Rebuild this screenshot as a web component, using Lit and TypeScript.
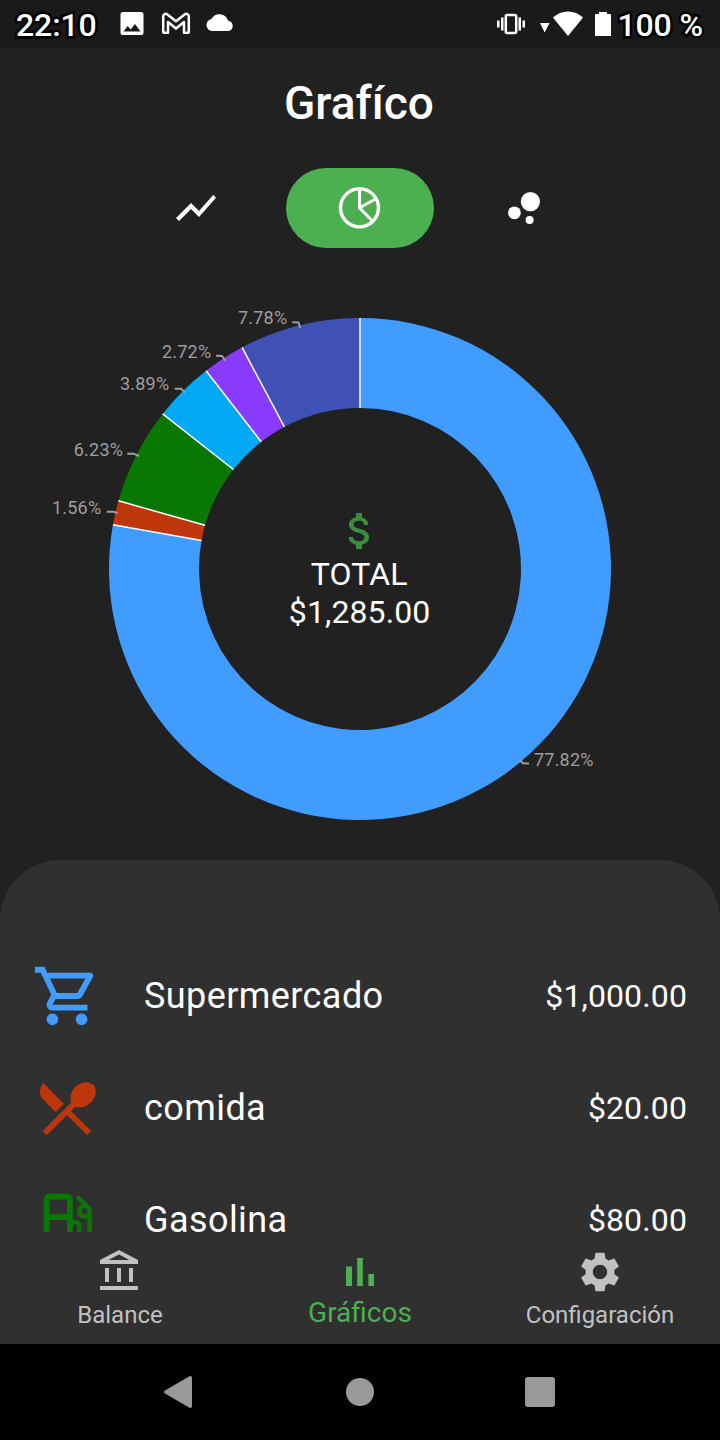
import { LitElement, html, svg, css } from "lit";
import { customElement, property } from "lit/decorators.js";

const ICONS: Record<string, string> = {
  line: "M3.5 18.49l6-6.01 4 4L22 6.92l-1.41-1.41-7.09 7.97-4-4L2 16.99z",
  money:
    "M11.8 10.9c-2.27-.59-3-1.2-3-2.15 0-1.09 1.01-1.85 2.7-1.85 1.78 0 2.44.85 2.5 2.1h2.21c-.07-1.72-1.12-3.3-3.21-3.81V3h-3v2.16c-1.94.42-3.5 1.68-3.5 3.61 0 2.31 1.91 3.46 4.7 4.13 2.5.6 3 1.48 3 2.41 0 .69-.49 1.79-2.7 1.79-2.06 0-2.87-.92-2.98-2.1h-2.2c.12 2.19 1.76 3.42 3.68 3.83V21h3v-2.15c1.95-.37 3.5-1.5 3.5-3.55 0-2.84-2.43-3.81-4.7-4.4z",
  cart: "M15.55 13c.75 0 1.41-.41 1.75-1.03l3.58-6.49c.37-.66-.11-1.48-.87-1.48H5.21l-.94-2H1v2h2l3.6 7.59-1.35 2.44C4.52 15.37 5.48 17 7 17h12v-2H7l1.1-2h7.45zM6.16 6h12.15l-2.76 5H8.53L6.16 6zM7 18c-1.1 0-1.99.9-1.99 2S5.9 22 7 22s2-.9 2-2-.9-2-2-2zm10 0c-1.1 0-1.99.9-1.99 2s.89 2 1.99 2 2-.9 2-2-.9-2-2-2z",
  food: "M8.1 13.34l2.83-2.83L3.91 3.5c-1.56 1.56-1.56 4.09 0 5.66l4.19 4.18zm6.78-1.81c1.53.71 3.68.21 5.27-1.38 1.91-1.91 2.28-4.65.81-6.12-1.46-1.46-4.2-1.1-6.12.81-1.59 1.59-2.09 3.74-1.38 5.27L3.7 19.87l1.41 1.41L12 14.41l6.88 6.88 1.41-1.41L13.41 13l1.47-1.47z",
  gas: "M19.77 7.23l.01-.01-3.72-3.72L15 4.56l2.11 2.11c-.94.36-1.61 1.26-1.61 2.33 0 1.38 1.12 2.5 2.5 2.5.36 0 .69-.08 1-.21v7.21c0 .55-.45 1-1 1s-1-.45-1-1V14c0-1.1-.9-2-2-2h-1V5c0-1.1-.9-2-2-2H6c-1.1 0-2 .9-2 2v16h10v-7.5h1.5v5c0 1.38 1.12 2.5 2.5 2.5s2.5-1.12 2.5-2.5V9c0-.69-.28-1.32-.73-1.77zM12 13.5V19H6v-7h6v1.5zm0-3.5H6V5h6v5zm6 0c-.55 0-1-.45-1-1s.45-1 1-1 1 .45 1 1-.45 1-1 1z",
  bank: "M6.5 10h-2v7h2v-7zm6 0h-2v7h2v-7zm8.5 9H2v2h19v-2zm-2.5-9h-2v7h2v-7zm-7-6.74L16.71 6H6.29l5.21-2.74m0-2.26L2 6v2h19V6l-9.5-5z",
  bars: "M5 9.2h3V19H5zM10.6 5h2.8v14h-2.8zm5.6 8H19v6h-2.8z",
  gear: "M19.14 12.94c.04-.3.06-.61.06-.94 0-.32-.02-.64-.07-.94l2.03-1.58c.18-.14.23-.41.12-.61l-1.92-3.32c-.12-.22-.37-.29-.59-.22l-2.39.96c-.5-.38-1.03-.7-1.62-.94l-.36-2.54c-.04-.24-.24-.41-.48-.41h-3.84c-.24 0-.43.17-.47.41l-.36 2.54c-.59.24-1.13.57-1.62.94l-2.39-.96c-.22-.08-.47 0-.59.22L2.74 8.87c-.12.21-.08.47.12.61l2.03 1.58c-.05.3-.09.63-.09.94s.02.64.07.94l-2.03 1.58c-.18.14-.23.41-.12.61l1.92 3.32c.12.22.37.29.59.22l2.39-.96c.5.38 1.03.7 1.62.94l.36 2.54c.05.24.24.41.48.41h3.84c.24 0 .44-.17.47-.41l.36-2.54c.59-.24 1.13-.56 1.62-.94l2.39.96c.22.08.47 0 .59-.22l1.92-3.32c.12-.22.07-.47-.12-.61l-2.01-1.58zM12 15.6c-1.98 0-3.6-1.62-3.6-3.6s1.62-3.6 3.6-3.6 3.6 1.62 3.6 3.6-1.62 3.6-3.6 3.6z",
};

const icon = (name: string, size: number) => html`
  <svg width=${size} height=${size} viewBox="0 0 24 24" fill="currentColor"><path d=${ICONS[name]} /></svg>
`;

@customElement("status-bar")
class StatusBar extends LitElement {
  static styles = css`
    :host {
      display: flex;
      align-items: center;
      height: 48px;
      background: #1a1a1a;
      color: #fff;
      box-sizing: border-box;
      padding: 0 17px 0 16px;
      justify-content: space-between;
    }
    .group { display: flex; align-items: center; height: 48px; }
    svg { display: block; flex: none; }
    .text {
      font: 500 32px/48px Roboto, sans-serif;
      letter-spacing: -0.100px;
      white-space: pre;
      paint-order: stroke fill;
      -webkit-text-stroke: 5px #000;
      margin-top: 2px;
    }
    .left svg { margin-left: 19.500px; }
    .right svg { margin-right: 1.600px; }
  `;
  render() {
    return html`
      <div class="group left">
        <span class="text">22:10</span>
        <svg width="122" height="48" viewBox="116 0 122 48" fill="#fff">
          <path fill-rule="evenodd" d="M123 12h18a2.500 2.500 0 0 1 2.500 2.500v18a2.500 2.500 0 0 1-2.500 2.500h-18a2.500 2.500 0 0 1-2.500-2.500v-18a2.500 2.500 0 0 1 2.500-2.500zM123.500 31.500h17l-5.500-7.500-4.300 5.500-3-3.500z" />
          <path fill="none" stroke="#fff" stroke-width="2.500" stroke-linejoin="round" d="M163.200 16.500a2.500 2.500 0 0 1 4.200-2L176 21.300l8.600-6.800a2.500 2.500 0 0 1 4.200 2V31.500a1.300 1.300 0 0 1-1.300 1.300H184V22l-8 6.500-8-6.500V32.800h-3.500a1.300 1.300 0 0 1-1.300-1.300z" />
          <path d="M212 31a6 6 0 0 1-.6-11.900 9 9 0 0 1 16.700 1.700A5.200 5.200 0 0 1 228.800 31z" />
        </svg>
      </div>
      <div class="group right">
        <svg width="121" height="48" viewBox="494 0 121 48" fill="#fff">
          <rect x="504.800" y="15" width="10.400" height="18" rx="1.500" fill="none" stroke="#fff" stroke-width="2.500" />
          <path d="M496 20.500h2.500v7H496zM500 17.500h2.500v13H500zM517.500 17.500h2.500v13h-2.500zM521.500 20.500h2.500v7h-2.500zM539 23h9.500L543.700 32.500z" />
          <path d="M552 17.500C560 9.500 574 9.500 582 17.500L567 36z" />
          <path d="M598 12h8v2h3a1 1 0 0 1 1 1v21h-16V15a1 1 0 0 1 1-1h3z" />
        </svg>
        <span class="text">100 %</span>
      </div>
    `;
  }
}

interface Slice { value: number; color: string; x: number; y: number; lead: string; }

const SLICES: Slice[] = [
  { value: 1000, color: "#409cff", x: 534, y: 766, lead: "519.5,759.5 523,763.3 529,763.5" },
  { value: 20, color: "#bf360c", x: 52, y: 514, lead: "106.7,511.7 113,511.7 117.700,513" },
  { value: 80, color: "#087802", x: 73.800, y: 456, lead: "127.3,453.7 133.7,453.7 139,456" },
  { value: 50, color: "#03a9f4", x: 120, y: 390, lead: "174.7,388.7 181,388.7 185.3,392.7" },
  { value: 35, color: "#883bff", x: 162, y: 358, lead: "216,355.7 222,356 225.3,360.7" },
  { value: 100, color: "#3f51b5", x: 238, y: 324, lead: "292.3,322.3 298.5,322.5 300.3,328.3" },
];

@customElement("donut-chart")
class DonutChart extends LitElement {
  static styles = css`
    :host { display: block; height: 572px; }
    svg { display: block; }
    .pct { font: 18px Roboto, sans-serif; fill: #9e9e9e; letter-spacing: 0.200px; }
    .center { font: 32px Roboto, sans-serif; fill: #fff; text-anchor: middle; letter-spacing: 0.100px; }
  `;
  render() {
    const cx = 360, cy = 569, R = 251, r = 161;
    const total = SLICES.reduce((s, d) => s + d.value, 0);
    const pt = (rad: number, a: number) => `${cx + rad * Math.sin(a)} ${cy - rad * Math.cos(a)}`;
    let acc = 0;
    const parts = SLICES.map((d) => {
      const a = (acc / total) * 2 * Math.PI;
      acc += d.value;
      const b = (acc / total) * 2 * Math.PI;
      const big = b - a > Math.PI ? 1 : 0;
      return {
        d,
        edge: `M${pt(r, a)}L${pt(R, a)}`,
        ring: `M${pt(R, a)}A${R} ${R} 0 ${big} 1 ${pt(R, b)}L${pt(r, b)}A${r} ${r} 0 ${big} 0 ${pt(r, a)}z`,
      };
    });
    return html`
      <svg width="720" height="572" viewBox="0 288 720 572">
        ${parts.map((p) => svg`<path d=${p.ring} fill=${p.d.color} />`)}
        ${parts.map((p) => svg`<path d=${p.edge} stroke="#fff" stroke-width="1.5" />`)}
        ${parts.map(
          ({ d }) => svg`
            <polyline points=${d.lead} fill="none" stroke="#9e9e9e" stroke-width="2" />
            <text class="pct" x=${d.x} y=${d.y}>${((d.value / total) * 100).toFixed(2)}%</text>`
        )}
        <path transform="translate(336 507) scale(2)" fill="#388e3c" d=${ICONS.money} />
        <text class="center" x="359.200" y="585">TOTAL</text>
        <text class="center" x="359.600" y="623">$1,285.00</text>
      </svg>
    `;
  }
}

@customElement("expense-row")
class ExpenseRow extends LitElement {
  @property() icon = "";
  @property() name = "";
  @property() amount = "";
  @property() color = "";
  static styles = css`
    :host { display: flex; align-items: center; height: 112px; padding: 0 33px 0 32px; color: #fff; font-family: Roboto, sans-serif; }
    .icon { display: flex; width: 112px; }
    .name { flex: 1; font-size: 36px; letter-spacing: 0.420px; }
    .amount { font-size: 32px; letter-spacing: 0.120px; }
  `;
  render() {
    return html`
      <span class="icon" style="color:${this.color}">${icon(this.icon, 70)}</span>
      <span class="name">${this.name}</span>
      <span class="amount">${this.amount}</span>
    `;
  }
}

@customElement("app-root")
class AppRoot extends LitElement {
  static styles = css`
    :host {
      display: flex;
      flex-direction: column;
      width: 720px;
      height: 1440px;
      overflow: hidden;
      background: #212121;
      color: #fff;
      font-family: Roboto, sans-serif;
    }
    svg { display: block; }
    .title { margin: 0; height: 112px; padding-right: 2px; font-size: 46px; font-weight: 500; line-height: 110px; text-align: center; }
    .tabs { display: flex; justify-content: center; gap: 16px; height: 80px; padding: 8px 0 40px; }
    .tab { display: flex; align-items: center; justify-content: center; width: 148px; height: 80px; border-radius: 40px; }
    .on { background: #4caf50; }
    .sheet { display: flex; flex-direction: column; height: 484px; background: #303030; border-radius: 60px 60px 0 0; }
    .list { height: 292px; padding-top: 80px; overflow: hidden; }
    .nav { display: grid; grid-template-columns: repeat(3, 1fr); height: 112px; color: #c1c1c1; }
    .item { display: flex; flex-direction: column; align-items: center; padding-top: 16px; font-size: 24px; line-height: 38px; }
    .active { color: #4caf50; font-size: 28px; line-height: 33px; }
    .system { display: grid; grid-template-columns: repeat(3, 180px); justify-content: center; justify-items: center; align-items: center; height: 96px; background: #000; }
    .back { margin-right: 4px; }
  `;
  render() {
    return html`
      <status-bar></status-bar>
      <h1 class="title">Grafíco</h1>
      <div class="tabs">
        <div class="tab">${icon("line", 48)}</div>
        <div class="tab on">
          <svg width="48" height="48" viewBox="0 0 48 48" fill="none" stroke="#fff" stroke-width="3.4">
            <circle cx="23.500" cy="23.800" r="19" />
            <path stroke-width="3" d="M23.500 4.500v19.300L36.500 37M23.500 23.800L40.500 14.500" />
          </svg>
        </div>
        <div class="tab">
          <svg width="48" height="48" viewBox="0 0 24 24" fill="#fff">
            <circle cx="7.2" cy="14.4" r="3.2" /><circle cx="14.8" cy="18" r="2" /><circle cx="15.2" cy="8.800" r="4.8" />
          </svg>
        </div>
      </div>
      <donut-chart></donut-chart>
      <div class="sheet">
        <div class="list">
          <expense-row icon="cart" name="Supermercado" amount="$1,000.00" color="#409cff"></expense-row>
          <expense-row icon="food" name="comida" amount="$20.00" color="#bf360c"></expense-row>
          <expense-row icon="gas" name="Gasolina" amount="$80.00" color="#087802"></expense-row>
        </div>
        <div class="nav">
          <div class="item">${icon("bank", 48)}<span>Balance</span></div>
          <div class="item active">${icon("bars", 48)}<span>Gráficos</span></div>
          <div class="item">${icon("gear", 48)}<span>Configaración</span></div>
        </div>
      </div>
      <div class="system">
        <svg class="back" width="28" height="32" viewBox="0 0 28 32" fill="#999"><path d="M1 14.600L25 .400Q28-.8 28 2v28q0 2.800-3 1.600L1 17.400Q-1 16 1 14.600z" /></svg>
        <svg width="28" height="28" viewBox="0 0 28 28" fill="#999"><circle cx="14" cy="14" r="14" /></svg>
        <svg width="30" height="30" viewBox="0 0 30 30" fill="#999"><rect width="30" height="30" rx="3" /></svg>
      </div>
    `;
  }
}
